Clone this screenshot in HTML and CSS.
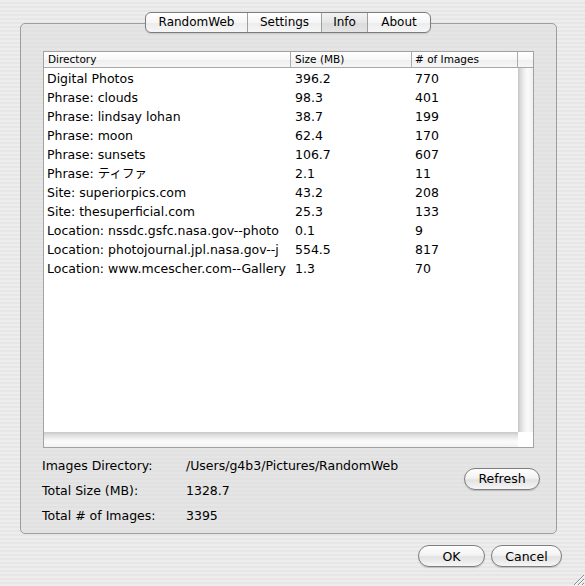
FILE: index.html
```html
<!DOCTYPE html>
<html>
<head>
<meta charset="utf-8">
<link rel="stylesheet" href="styles.css">
</head>
<body>
<div class="window">
  <div class="tabs">
    <span class="tab tab-a">RandomWeb</span>
    <span class="tab tab-b">Settings</span>
    <span class="tab tab-c sel">Info</span>
    <span class="tab tab-d">About</span>
  </div>
  <div class="group">
    <div class="table">
      <div class="th th-dir">Directory</div>
      <div class="th th-size">Size (MB)</div>
      <div class="th th-num"># of Images</div>
      <div class="th th-corner"></div>
      <div class="rows">
        <div class="c c-dir">Digital Photos</div><div class="c c-size">396.2</div><div class="c c-num">770</div>
        <div class="c c-dir">Phrase: clouds</div><div class="c c-size">98.3</div><div class="c c-num">401</div>
        <div class="c c-dir">Phrase: lindsay lohan</div><div class="c c-size">38.7</div><div class="c c-num">199</div>
        <div class="c c-dir">Phrase: moon</div><div class="c c-size">62.4</div><div class="c c-num">170</div>
        <div class="c c-dir">Phrase: sunsets</div><div class="c c-size">106.7</div><div class="c c-num">607</div>
        <div class="c c-dir">Phrase: ティファ</div><div class="c c-size">2.1</div><div class="c c-num">11</div>
        <div class="c c-dir">Site: superiorpics.com</div><div class="c c-size">43.2</div><div class="c c-num">208</div>
        <div class="c c-dir">Site: thesuperficial.com</div><div class="c c-size">25.3</div><div class="c c-num">133</div>
        <div class="c c-dir">Location: nssdc.gsfc.nasa.gov--photo</div><div class="c c-size">0.1</div><div class="c c-num">9</div>
        <div class="c c-dir">Location: photojournal.jpl.nasa.gov--j</div><div class="c c-size">554.5</div><div class="c c-num">817</div>
        <div class="c c-dir">Location: www.mcescher.com--Gallery</div><div class="c c-size">1.3</div><div class="c c-num">70</div>
      </div>
      <div class="vscroll"></div>
      <div class="hscroll"></div>
      <div class="corner"></div>
    </div>
    <div class="info">
      <div class="lbl">Images Directory:</div><div class="val">/Users/g4b3/Pictures/RandomWeb</div>
      <button class="btn btn-refresh">Refresh</button>
      <div class="lbl">Total Size (MB):</div><div class="val">1328.7</div>
      <div class="lbl">Total # of Images:</div><div class="val">3395</div>
    </div>
  </div>
  <div class="actions">
    <button class="btn btn-ok">OK</button>
    <button class="btn btn-cancel">Cancel</button>
  </div>
  <svg class="grip" width="11" height="11" viewBox="0 0 11 11">
    <path d="M11 1 L1 11 M11 5 L5 11 M11 9 L9 11" stroke="#8a8a8a" stroke-width="1"/>
    <path d="M11 2 L2 11 M11 6 L6 11 M11 10 L10 11" stroke="#ffffff" stroke-width="1"/>
  </svg>
</div>
</body>
</html>
```

FILE: styles.css
```css
* { box-sizing: border-box; }
html, body { margin: 0; padding: 0; }
body {
  width: 585px;
  height: 586px;
  overflow: hidden;
  font-family: "DejaVu Sans", "Noto Sans CJK JP", sans-serif;
  color: #000;
  background: repeating-linear-gradient(#ededed 0 2px, #e6e6e6 2px 4px);
}
.window {
  position: relative;
  height: 586px;
  display: flex;
  flex-direction: column;
}
.tabs {
  align-self: flex-start;
  display: flex;
  margin: 12px 0 0 145px;
  height: 21px;
  border: 1px solid #7c7c7c;
  border-radius: 6px;
  overflow: hidden;
  position: relative;
  z-index: 1;
  background: linear-gradient(#ffffff, #f6f6f6 50%, #ececec 52%, #f6f6f6);
  box-shadow: 0 1px 1px rgba(0,0,0,0.12);
}
.tab {
  font-size: 12px;
  line-height: 19px;
  text-align: center;
  border-left: 1px solid #9e9e9e;
}
.tab-a { width: 101px; border-left: 0; }
.tab-b { width: 74px; }
.tab-c { width: 46px; }
.tab-d { width: 63px; }
.tab.sel {
  background: linear-gradient(#f2f2f2, #e6e6e6 50%, #dadada 52%, #e4e4e4);
}
.group {
  margin: -10px 0 0 20px;
  width: 537px;
  height: 511px;
  border: 1px solid #9d9d9d;
  border-radius: 5px;
  background: repeating-linear-gradient(#e5e5e5 0 2px, #e1e1e1 2px 4px);
  padding-top: 27px;
}
.table {
  margin: 0 22px;
  width: 491px;
  height: 397px;
  border: 1px solid #a2a2a2;
  background: #fff;
  display: grid;
  grid-template-columns: 247px 121px 106px 15px;
  grid-template-rows: 16px 364px 15px;
}
.th {
  font-size: 10.5px;
  line-height: 15px;
  white-space: nowrap;
  overflow: hidden;
  border-bottom: 1px solid #a8a8a8;
  border-right: 1px solid #ababab;
  background: linear-gradient(#ffffff, #f7f7f7 50%, #eeeeee 52%, #f7f7f7);
}
.th-dir { padding-left: 4px; }
.th-size { padding-left: 4px; }
.th-num { padding-left: 3px; }
.th-corner { border-right: 0; }
.rows {
  grid-column: 1 / 4;
  grid-row: 2;
  display: grid;
  grid-template-columns: 247px 121px 106px;
  grid-auto-rows: 19px;
  align-content: start;
  padding-top: 1px;
}
.c {
  font-size: 12.5px;
  line-height: 19px;
  white-space: nowrap;
  overflow: hidden;
}
.c-dir { padding-left: 3px; }
.c-size { padding-left: 4px; }
.c-num { padding-left: 3px; }
.vscroll {
  grid-column: 4;
  grid-row: 2;
  background: linear-gradient(to right, #c4c4c4, #dedede 20%, #f2f2f2 45%, #fbfbfb 65%, #f0f0f0 100%);
}
.hscroll {
  grid-column: 1 / 4;
  grid-row: 3;
  background: linear-gradient(#c8c8c8, #dedede 20%, #f1f1f1 45%, #fbfbfb 65%, #f2f2f2 100%);
}
.corner {
  grid-column: 4;
  grid-row: 3;
  background: #fff;
}
.info {
  display: grid;
  grid-template-columns: 144px 1fr 76px;
  grid-template-rows: repeat(3, 25px);
  padding: 5px 16px 0 21px;
  font-size: 12.5px;
}
.lbl, .val {
  line-height: 25px;
  white-space: nowrap;
}
.btn {
  font-family: "DejaVu Sans", sans-serif;
  font-size: 12.5px;
  color: #000;
  height: 22px;
  padding: 0;
  border: 1px solid #7e7e7e;
  border-radius: 11px;
  background: linear-gradient(#fefefe, #f3f3f3 45%, #e2e2e2 55%, #f6f6f6);
  box-shadow: 0 1px 1px rgba(0,0,0,0.18);
}
.btn-refresh {
  grid-column: 3;
  grid-row: 1 / 3;
  align-self: center;
  width: 76px;
  margin-top: 1px;
}
.actions {
  display: flex;
  justify-content: flex-end;
  gap: 6px;
  margin-top: 11px;
  padding-right: 23px;
}
.btn-ok { width: 67px; }
.btn-cancel { width: 71px; }
.grip {
  position: absolute;
  right: 1px;
  bottom: 1px;
}
```
